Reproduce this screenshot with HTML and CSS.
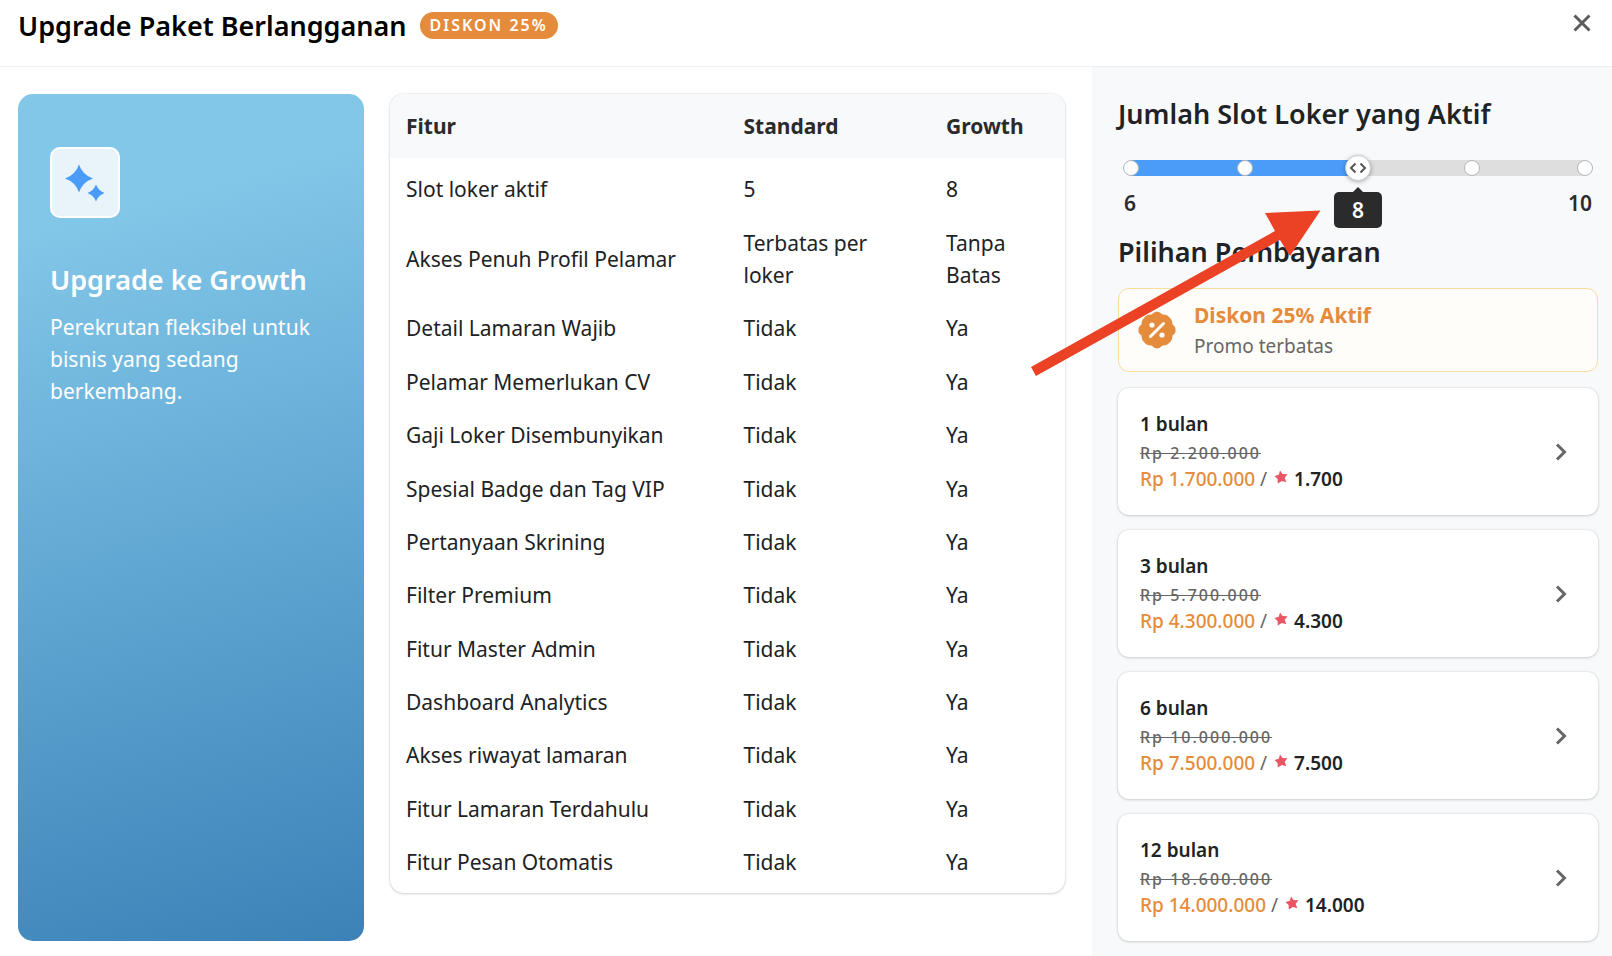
FILE: index.html
```html
<!DOCTYPE html>
<html lang="id">
<head>
  <meta charset="UTF-8" />
  <meta name="viewport" content="width=device-width, initial-scale=1.0"/>
  <title>Upgrade Paket Berlangganan</title>
  <link rel="stylesheet" href="styles.css">
</head>
<body>
  <header class="header">
    <h1>Upgrade Paket Berlangganan</h1>
    <span class="badge">DISKON 25%</span>
    <button class="close" type="button" aria-label="Tutup">
      <svg width="18" height="18" viewBox="0 0 18 18"><path d="M1.5 1.5l15 15M16.5 1.5l-15 15"/></svg>
    </button>
  </header>

  <div class="layout">
    <main class="main">
      <section class="plan">
        <div class="plan-icon">
          <svg width="50" height="50" viewBox="0 0 50 50">
            <path d="M19 6.500Q22.500 17 33 20.500Q22.500 24 19 34.500Q15.500 24 5 20.500Q15.500 17 19 6.500z"/>
            <path d="M36 26.500Q38.300 32.700 44.500 35Q38.300 37.300 36 43.500Q33.700 37.300 27.500 35Q33.700 32.700 36 26.500z"/>
          </svg>
        </div>
        <h2>Upgrade ke Growth</h2>
        <p>Perekrutan fleksibel untuk bisnis yang sedang berkembang.</p>
      </section>

      <section class="compare">
        <table>
          <thead>
            <tr><th class="col-feature">Fitur</th><th class="col-standard">Standard</th><th>Growth</th></tr>
          </thead>
          <tbody>
            <tr><td>Slot loker aktif</td><td>5</td><td id="growthSlots">8</td></tr>
            <tr><td>Akses Penuh Profil Pelamar</td><td>Terbatas per loker</td><td>Tanpa Batas</td></tr>
            <tr><td>Detail Lamaran Wajib</td><td>Tidak</td><td>Ya</td></tr>
            <tr><td>Pelamar Memerlukan CV</td><td>Tidak</td><td>Ya</td></tr>
            <tr><td>Gaji Loker Disembunyikan</td><td>Tidak</td><td>Ya</td></tr>
            <tr><td>Spesial Badge dan Tag VIP</td><td>Tidak</td><td>Ya</td></tr>
            <tr><td>Pertanyaan Skrining</td><td>Tidak</td><td>Ya</td></tr>
            <tr><td>Filter Premium</td><td>Tidak</td><td>Ya</td></tr>
            <tr><td>Fitur Master Admin</td><td>Tidak</td><td>Ya</td></tr>
            <tr><td>Dashboard Analytics</td><td>Tidak</td><td>Ya</td></tr>
            <tr><td>Akses riwayat lamaran</td><td>Tidak</td><td>Ya</td></tr>
            <tr><td>Fitur Lamaran Terdahulu</td><td>Tidak</td><td>Ya</td></tr>
            <tr><td>Fitur Pesan Otomatis</td><td>Tidak</td><td>Ya</td></tr>
          </tbody>
        </table>
      </section>
    </main>

    <aside class="sidebar">
      <h2><label for="slots">Jumlah Slot Loker yang Aktif</label></h2>
      <div class="slider">
        <div class="track">
          <div class="fill" id="fill" style="width: 50%"></div>
          <i class="dot"></i><i class="dot"></i><i class="dot"></i><i class="dot"></i><i class="dot"></i>
        </div>
        <input type="range" id="slots" min="6" max="10" step="1" value="8">
        <div class="rail">
          <div class="marker" id="marker" style="left: 50%">
            <svg width="26" height="26" viewBox="0 0 26 26"><path d="M10.500 8.500L6 13l4.500 4.500M15.500 8.500L20 13l-4.500 4.500"/></svg>
            <output class="tooltip" id="tooltip" for="slots">8</output>
          </div>
        </div>
      </div>
      <div class="range-labels"><span>6</span><span>10</span></div>

      <h2>Pilihan Pembayaran</h2>
      <div class="promo">
        <svg width="38" height="38" viewBox="0 0 38 38">
          <path class="seal" d="M19 0.500Q22 1 24.500 3.500Q29 3 31.500 6.500Q34.500 9 34.500 13.500Q38 16 37.500 19Q38 22 34.500 24.500Q34.500 29 31.500 31.500Q29 35 24.500 34.500Q22 37 19 37.500Q16 37 13.500 34.500Q9 35 6.500 31.500Q3.500 29 3.500 24.500Q0 22 0.500 19Q0 16 3.500 13.500Q3.500 9 6.500 6.500Q9 3 13.500 3.500Q16 1 19 0.500z"/>
          <path class="slash" d="M25.500 12.500l-13 13"/>
          <circle cx="14" cy="14" r="2.600"/><circle cx="24" cy="24" r="2.600"/>
        </svg>
        <div>
          <strong>Diskon 25% Aktif</strong>
          <p>Promo terbatas</p>
        </div>
      </div>

      <div class="options">
        <button class="option" type="button">
          <span class="option-text">
            <span class="period">1 bulan</span>
            <s>Rp 2.200.000</s>
            <span class="price"><span class="now">Rp 1.700.000</span> / <svg class="star" width="14" height="14" viewBox="0 0 14 14"><use href="#star"/></svg> <b>1.700</b></span>
          </span>
          <svg class="chevron" width="12" height="18" viewBox="0 0 12 18"><path d="M2 1.500L9.500 9L2 16.500"/></svg>
        </button>
        <button class="option" type="button">
          <span class="option-text">
            <span class="period">3 bulan</span>
            <s>Rp 5.700.000</s>
            <span class="price"><span class="now">Rp 4.300.000</span> / <svg class="star" width="14" height="14" viewBox="0 0 14 14"><use href="#star"/></svg> <b>4.300</b></span>
          </span>
          <svg class="chevron" width="12" height="18" viewBox="0 0 12 18"><path d="M2 1.500L9.500 9L2 16.500"/></svg>
        </button>
        <button class="option" type="button">
          <span class="option-text">
            <span class="period">6 bulan</span>
            <s>Rp 10.000.000</s>
            <span class="price"><span class="now">Rp 7.500.000</span> / <svg class="star" width="14" height="14" viewBox="0 0 14 14"><use href="#star"/></svg> <b>7.500</b></span>
          </span>
          <svg class="chevron" width="12" height="18" viewBox="0 0 12 18"><path d="M2 1.500L9.500 9L2 16.500"/></svg>
        </button>
        <button class="option" type="button">
          <span class="option-text">
            <span class="period">12 bulan</span>
            <s>Rp 18.600.000</s>
            <span class="price"><span class="now">Rp 14.000.000</span> / <svg class="star" width="14" height="14" viewBox="0 0 14 14"><use href="#star"/></svg> <b>14.000</b></span>
          </span>
          <svg class="chevron" width="12" height="18" viewBox="0 0 12 18"><path d="M2 1.500L9.500 9L2 16.500"/></svg>
        </button>
      </div>

      <!-- arrow pointing at the slider value -->
      <svg class="pointer" width="292" height="168" viewBox="0 0 292 168"><path d="M289.500 1.500L234 4l10 18L0 158l5 9L249 31l10 16z"/></svg>
    </aside>
  </div>

  <svg class="sprite" width="0" height="0" aria-hidden="true">
    <symbol id="star" viewBox="0 0 14 14"><path d="M6 0.500L8.500 4L13.500 4.200L10.700 7.700L12.300 12.300L7.800 11L3.800 13.500L3.600 9L0.500 6L4.800 4.700z"/></symbol>
  </svg>

  <script>
    const slots = document.getElementById('slots');

    function updateSlots() {
      const percent = (slots.value - slots.min) / (slots.max - slots.min) * 100;
      document.getElementById('fill').style.width = percent + '%';
      document.getElementById('marker').style.left = percent + '%';
      document.getElementById('tooltip').textContent = slots.value;
      document.getElementById('growthSlots').textContent = slots.value;
    }

    slots.addEventListener('input', updateSlots);
  </script>
</body>
</html>
```

FILE: styles.css
```css
:root {
  --text: #202224;
  --muted: #666;
  --orange: #e58b3c;
  --blue: #4a9cf8;
  --panel: #f8f9fb;
  --shadow: 0 0 2px rgba(0,0,0,0.16), 0 1px 3px rgba(0,0,0,0.14);
}
* {
  box-sizing: border-box;
}
body {
  margin: 0;
  min-height: 100vh;
  display: flex;
  flex-direction: column;
  background: #fff;
  color: var(--text);
  font-family: "Noto Sans", sans-serif;
  font-size: 21px;
  line-height: 32px;
}
h1, h2, p {
  margin: 0;
}
h1, h2 {
  font-size: 27px;
  font-weight: 600;
  line-height: 36px;
}
button {
  font-family: inherit;
  border: none;
  cursor: pointer;
}

.header {
  display: flex;
  align-items: flex-start;
  gap: 13px;
  padding: 8px 21px 22px 18px;
  border-bottom: 1px solid #f0f0f0;
}
h1 {
  color: #000;
}
.badge {
  margin-top: 4px;
  padding: 0 10px;
  border-radius: 14px;
  background: var(--orange);
  color: #fff;
  font-size: 16px;
  font-weight: 600;
  line-height: 27px;
  letter-spacing: 2px;
}
.close {
  display: flex;
  margin-left: auto;
  margin-top: 6px;
  padding: 0;
  background: none;
}
.close path {
  fill: none;
  stroke: #5c5c5c;
  stroke-width: 3;
}

.layout {
  flex: 1;
  display: grid;
  grid-template-columns: 1fr 520px;
}
.main {
  display: grid;
  grid-template-columns: 346fr 675fr;
  gap: 26px;
  padding: 27px 27px 15px 18px;
}

.plan {
  padding: 53px 32px;
  border-radius: 15px;
  background: linear-gradient(165deg, #82c7e8 15%, #5fa6d2 55%, #3c82b8);
  color: #fff;
}
.plan-icon {
  display: flex;
  align-items: center;
  justify-content: center;
  width: 70px;
  height: 71px;
  margin-bottom: 44px;
  border: 2px solid #fff;
  border-radius: 10px;
  background: #e8f3fa;
}
.plan-icon path {
  fill: var(--blue);
}
.plan h2 {
  margin-bottom: 13px;
}

.compare {
  align-self: start;
  border-radius: 14px;
  box-shadow: var(--shadow);
  overflow: hidden;
}
table {
  width: 100%;
  height: 799px;
  border-collapse: collapse;
  table-layout: fixed;
  text-align: left;
}
th {
  padding: 16px;
  background: var(--panel);
  color: #2b2b2b;
  font-weight: 700;
}
td {
  padding: 10px 16px;
}
.col-feature {
  width: 50%;
}
.col-standard {
  width: 30%;
}
tbody tr:first-child td {
  padding-top: 14px;
}
tbody tr:last-child td {
  padding-bottom: 14px;
}

.sidebar {
  position: relative;
  padding: 29px 14px 15px 26px;
  background: var(--panel);
}
.slider {
  position: relative;
  height: 26px;
  margin-top: 23px;
}
.track {
  position: absolute;
  inset: 5px 13px;
  display: flex;
  align-items: center;
  justify-content: space-between;
  background: #dedede;
}
.fill {
  position: absolute;
  inset: 0 auto 0 0;
  background: var(--blue);
}
.dot {
  position: relative;
  width: 16px;
  height: 16px;
  margin: 0 -8px;
  border: 1px solid #b5b5b5;
  border-radius: 50%;
  background: #fff;
}
.slider input {
  position: relative;
  display: block;
  width: 100%;
  height: 26px;
  margin: 0;
  appearance: none;
  background: none;
  cursor: pointer;
}
.slider input::-webkit-slider-thumb {
  appearance: none;
  width: 26px;
  height: 26px;
  border: 1px solid #ccc;
  border-radius: 50%;
  background: #fff;
  box-shadow: 0 1px 4px rgba(0,0,0,0.3);
}
.rail {
  position: absolute;
  inset: 0 13px;
  pointer-events: none;
}
.marker {
  position: absolute;
  display: flex;
  flex-direction: column;
  align-items: center;
  gap: 11px;
  transform: translateX(-50%);
}
.marker path {
  fill: none;
  stroke: #555;
  stroke-width: 2;
}
.tooltip {
  position: relative;
  width: 48px;
  border-radius: 5px;
  background: #2b2b2b;
  color: #fff;
  font-weight: 600;
  line-height: 36px;
  text-align: center;
}
.tooltip::before {
  content: "";
  position: absolute;
  top: -5px;
  left: 19px;
  border: 5px solid transparent;
  border-top: none;
  border-bottom-color: #2b2b2b;
}
.range-labels {
  display: flex;
  justify-content: space-between;
  margin: 6px 6px 15px;
  color: #2b2b2b;
  font-weight: 600;
}

.promo {
  display: flex;
  align-items: center;
  gap: 18px;
  margin-top: 18px;
  padding: 10px 19px;
  border: 1px solid #f9dc9f;
  border-radius: 11px;
  background: #fffdf9;
}
.promo strong {
  display: block;
  color: var(--orange);
  font-weight: 700;
}
.promo p {
  color: var(--muted);
  font-size: 19px;
  line-height: 30px;
}
.seal {
  fill: var(--orange);
}
.slash {
  stroke: #fff;
  stroke-width: 3;
  stroke-linecap: round;
}
.promo circle {
  fill: #fff;
}

.options {
  display: flex;
  flex-direction: column;
  gap: 15px;
  margin-top: 16px;
}
.option {
  display: flex;
  align-items: center;
  justify-content: space-between;
  padding: 22px 31px 22px 22px;
  border-radius: 11px;
  background: #fff;
  box-shadow: var(--shadow);
  color: var(--text);
  font-size: 19px;
  line-height: 28px;
  text-align: left;
}
.option-text {
  display: flex;
  flex-direction: column;
}
.period {
  margin-bottom: 3px;
  font-weight: 600;
}
.option s {
  color: var(--muted);
  font-size: 16px;
  font-weight: 500;
  line-height: 24px;
  letter-spacing: 2px;
}
.price {
  color: var(--muted);
}
.price b {
  color: var(--text);
  font-weight: 600;
}
.now {
  color: var(--orange);
  font-weight: 500;
}
.star {
  margin: 0 1px 2px 2px;
  fill: #ec5564;
}
.chevron path {
  fill: none;
  stroke: #666;
  stroke-width: 3;
}

.pointer {
  position: absolute;
  top: 142px;
  left: -61px;
  fill: #eb4226;
  pointer-events: none;
}
.sprite {
  position: absolute;
}
```
